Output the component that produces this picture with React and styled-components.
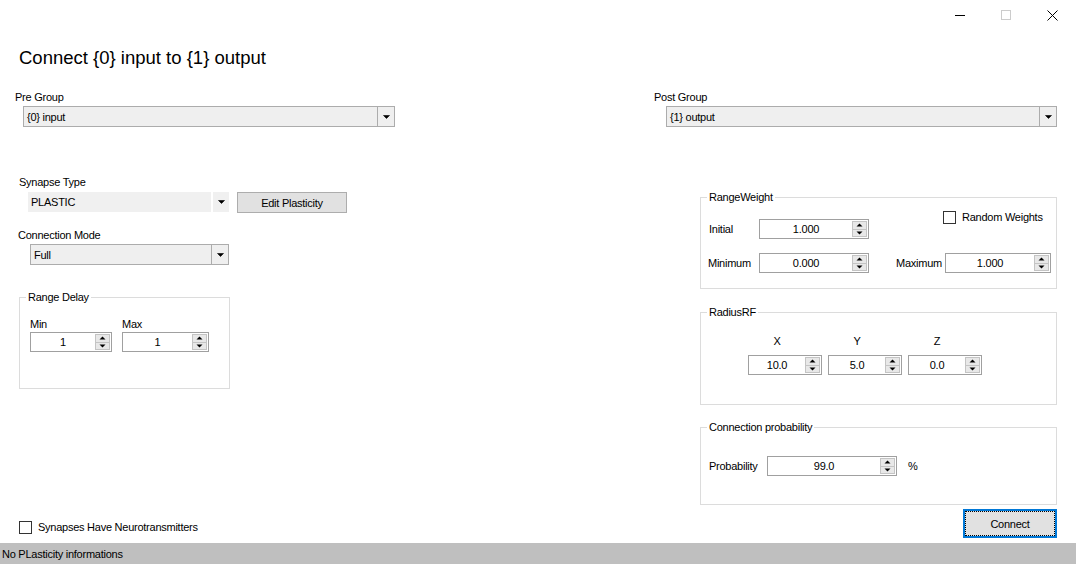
import React from 'react';
import styled, { createGlobalStyle } from 'styled-components';

const GlobalStyle = createGlobalStyle`
  html, body {
    margin: 0;
    padding: 0;
    background: #ffffff;
  }
  body {
    font-family: "Liberation Sans", Arial, sans-serif;
  }
`;

const Window = styled.div`
  width: 1076px;
  height: 564px;
  display: flex;
  flex-direction: column;
  background: #ffffff;
  overflow: hidden;
  font-size: 11px;
  letter-spacing: -0.25px;
  color: #000000;
`;

const CaptionBar = styled.div`
  display: flex;
  justify-content: flex-end;
  height: 30px;
  padding-right: 1px;
  flex-shrink: 0;
`;

const CaptionButton = styled.div`
  width: 46px;
  height: 30px;
  display: flex;
  align-items: center;
  justify-content: center;
`;

const Heading = styled.h1`
  margin: 15px 0 0 19px;
  font-size: 18.5px;
  line-height: 26px;
  font-weight: normal;
  letter-spacing: 0;
  flex-shrink: 0;
`;

const Content = styled.div`
  flex: 1;
  display: grid;
  grid-template-columns: 380px 403px;
  grid-template-rows: auto 1fr;
  column-gap: 259px;
  padding: 19px 0 4px 15px;
  min-height: 0;
`;

const Field = styled.div`
  display: flex;
  flex-direction: column;
`;

const Label = styled.div`
  line-height: 14px;
  height: 14px;
  margin-left: ${p => p.$indent || 0}px;
  margin-top: ${p => p.$top || 0}px;
  white-space: nowrap;
`;

const Combo = styled.div`
  display: flex;
  box-sizing: border-box;
  width: ${p => p.$w}px;
  height: 21px;
  margin-left: ${p => p.$indent || 0}px;
  margin-top: 2px;
  border: 1px solid #acacac;
  background: #efefef;
`;

const FlatCombo = styled(Combo)`
  height: 20px;
  margin-top: 0;
  border: none;
  background: #f0f0f0;
`;

const ComboText = styled.div`
  flex: 1;
  display: flex;
  align-items: center;
  padding-left: 3px;
  white-space: nowrap;
`;

const ComboArrow = styled.div`
  width: 16px;
  display: flex;
  align-items: center;
  justify-content: center;
  border-left: ${p => (p.$flat ? '2px solid #ffffff' : '1px solid #acacac')};
`;

const LeftColumn = styled.div`
  display: flex;
  flex-direction: column;
  padding-left: 4px;
`;

const RightColumn = styled.div`
  display: flex;
  flex-direction: column;
  padding-left: 46px;
`;

const InlineRow = styled.div`
  display: flex;
  align-items: flex-start;
  margin-top: 3px;
`;

const Button = styled.button`
  box-sizing: border-box;
  width: ${p => p.$w}px;
  height: ${p => p.$h}px;
  margin-left: ${p => p.$indent || 0}px;
  padding: 0;
  background: #e1e1e1;
  border: 1px solid #adadad;
  font-family: inherit;
  font-size: 11px;
  letter-spacing: -0.25px;
  color: #000000;
`;

const PrimaryButton = styled(Button)`
  align-self: flex-end;
  margin-top: 4px;
  border: 2px solid #0078d7;
  outline: 1px dotted #000000;
  outline-offset: -3px;
`;

const GroupBox = styled.fieldset`
  box-sizing: border-box;
  width: ${p => p.$w}px;
  min-width: 0;
  margin: ${p => p.$top || 0}px 0 0 0;
  padding: 0;
  border: 1px solid #dcdcdc;
`;

const Legend = styled.legend`
  margin-left: 6px;
  padding: 0 2px;
  line-height: 13px;
  height: 13px;
`;

const GroupBody = styled.div`
  padding: ${p => p.$pad};
`;

const SpinBox = styled.div`
  display: flex;
  box-sizing: border-box;
  width: ${p => p.$w}px;
  height: 20px;
  border: 1px solid #a0a0a0;
  background: #ffffff;
`;

const SpinValue = styled.div`
  flex: 1;
  display: flex;
  align-items: center;
  justify-content: center;
`;

const SpinButtons = styled.div`
  width: 15px;
  display: flex;
  flex-direction: column;
  padding: 1px 1px 1px 0;
`;

const SpinHalf = styled.div`
  flex: 1;
  display: flex;
  align-items: center;
  justify-content: center;
  background: #e8e8e8;
  border: 1px solid #c4c4c4;
  border-top: ${p => (p.$down ? 'none' : '1px solid #c4c4c4')};
`;

const DelayRow = styled.div`
  display: flex;
  gap: 10px;
`;

const LabeledSpin = styled.div`
  display: flex;
  flex-direction: column;
  gap: 1px;
`;

const WeightGrid = styled.div`
  display: grid;
  grid-template-columns: 50px 110px 27px 49px 106px;
  grid-template-rows: 29px 20px;
  row-gap: 14px;
`;

const GridLabel = styled.div`
  align-self: end;
  line-height: 20px;
  height: 20px;
  width: ${p => (p.$w ? `${p.$w}px` : 'auto')};
  margin-left: ${p => p.$shift || 0}px;
  white-space: nowrap;
`;

const SpinCell = styled.div`
  align-self: end;
`;

const CheckRow = styled.label`
  display: flex;
  align-items: center;
  gap: 6px;
  height: 14px;
  white-space: nowrap;
  grid-column: ${p => p.$col || 'auto'};
  margin-left: ${p => p.$indent || 0}px;
  margin-top: ${p => (p.$push ? 'auto' : '0')};
  margin-bottom: ${p => p.$bottom || 0}px;
  align-self: start;
`;

const CheckBox = styled.span`
  box-sizing: border-box;
  width: 13px;
  height: 13px;
  border: 1px solid #333333;
  background: #ffffff;
  flex-shrink: 0;
`;

const AxisRow = styled.div`
  display: flex;
  gap: 6px;
`;

const AxisCell = styled.div`
  display: flex;
  flex-direction: column;
  gap: 7px;
`;

const AxisLabel = styled.div`
  line-height: 14px;
  height: 14px;
  padding-right: 16px;
  text-align: center;
`;

const ProbRow = styled.div`
  display: flex;
  align-items: center;
  height: 20px;
`;

const Unit = styled.span`
  margin-left: 11px;
`;

const StatusBar = styled.div`
  height: 21px;
  flex-shrink: 0;
  display: flex;
  align-items: center;
  padding: 1px 0 0 2px;
  box-sizing: border-box;
  background: #bfbfbf;
`;

const DropArrow = () => (
  <svg width="7" height="4" viewBox="0 0 7 4">
    <path d="M0.5 0.5 H6.5 L3.5 3.5 Z" fill="#000" stroke="#000" strokeWidth="0.6" />
  </svg>
);

const SpinArrow = ({ down }) => (
  <svg width="7" height="4" viewBox="0 0 7 4">
    {down ? <path d="M0.5 0.5 H6.5 L3.5 3.5 Z" fill="#000" /> : <path d="M0.5 3.5 H6.5 L3.5 0.5 Z" fill="#000" />}
  </svg>
);

const Spinner = ({ value, w }) => (
  <SpinBox $w={w}>
    <SpinValue>{value}</SpinValue>
    <SpinButtons>
      <SpinHalf>
        <SpinArrow />
      </SpinHalf>
      <SpinHalf $down>
        <SpinArrow down />
      </SpinHalf>
    </SpinButtons>
  </SpinBox>
);

const App = () => (
  <>
    <GlobalStyle />
    <Window>
      <CaptionBar>
        <CaptionButton>
          <svg width="10" height="10" viewBox="0 0 10 10">
            <path d="M0 5.5 H10" stroke="#000" strokeWidth="1" />
          </svg>
        </CaptionButton>
        <CaptionButton>
          <svg width="10" height="10" viewBox="0 0 10 10">
            <rect x="0.5" y="0.5" width="9" height="9" fill="none" stroke="#cccccc" strokeWidth="1" />
          </svg>
        </CaptionButton>
        <CaptionButton>
          <svg width="11" height="11" viewBox="0 0 11 11">
            <path d="M0.5 0.5 L10.5 10.5 M10.5 0.5 L0.5 10.5" stroke="#000" strokeWidth="1" />
          </svg>
        </CaptionButton>
      </CaptionBar>

      <Heading>Connect {'{0}'} input to {'{1}'} output</Heading>

      <Content>
        <Field>
          <Label>Pre Group</Label>
          <Combo $w={372} $indent={8}>
            <ComboText>{'{0}'} input</ComboText>
            <ComboArrow>
              <DropArrow />
            </ComboArrow>
          </Combo>
        </Field>
        <Field>
          <Label>Post Group</Label>
          <Combo $w={391} $indent={12}>
            <ComboText>{'{1}'} output</ComboText>
            <ComboArrow>
              <DropArrow />
            </ComboArrow>
          </Combo>
        </Field>

        <LeftColumn>
          <Label $top={48}>Synapse Type</Label>
          <InlineRow>
            <FlatCombo $w={201} $indent={9}>
              <ComboText>PLASTIC</ComboText>
              <ComboArrow $flat>
                <DropArrow />
              </ComboArrow>
            </FlatCombo>
            <Button $w={110} $h={21} $indent={8}>Edit Plasticity</Button>
          </InlineRow>

          <Label $top={15} $indent={-1}>Connection Mode</Label>
          <Combo $w={199} $indent={11}>
            <ComboText>Full</ComboText>
            <ComboArrow>
              <DropArrow />
            </ComboArrow>
          </Combo>

          <GroupBox $w={211} $top={26}>
            <Legend>Range Delay</Legend>
            <GroupBody $pad="13px 0 36px 10px">
              <DelayRow>
                <LabeledSpin>
                  <Label>Min</Label>
                  <Spinner value="1" w={82} />
                </LabeledSpin>
                <LabeledSpin>
                  <Label>Max</Label>
                  <Spinner value="1" w={87} />
                </LabeledSpin>
              </DelayRow>
            </GroupBody>
          </GroupBox>

          <CheckRow $push $bottom={5}>
            <CheckBox />
            Synapses Have Neurotransmitters
          </CheckRow>
        </LeftColumn>

        <RightColumn>
          <GroupBox $w={357} $top={64}>
            <Legend>RangeWeight</Legend>
            <GroupBody $pad="6px 0 15px 8px">
              <WeightGrid>
                <GridLabel>Initial</GridLabel>
                <SpinCell>
                  <Spinner value="1.000" w={110} />
                </SpinCell>
                <CheckRow $col="5" $indent={-2}>
                  <CheckBox />
                  Random Weights
                </CheckRow>
                <GridLabel $shift={-1}>Minimum</GridLabel>
                <SpinCell>
                  <Spinner value="0.000" w={110} />
                </SpinCell>
                <span />
                <GridLabel>Maximum</GridLabel>
                <SpinCell>
                  <Spinner value="1.000" w={106} />
                </SpinCell>
              </WeightGrid>
            </GroupBody>
          </GroupBox>

          <GroupBox $w={357} $top={17}>
            <Legend>RadiusRF</Legend>
            <GroupBody $pad="15px 0 29px 47px">
              <AxisRow>
                <AxisCell>
                  <AxisLabel>X</AxisLabel>
                  <Spinner value="10.0" w={74} />
                </AxisCell>
                <AxisCell>
                  <AxisLabel>Y</AxisLabel>
                  <Spinner value="5.0" w={74} />
                </AxisCell>
                <AxisCell>
                  <AxisLabel>Z</AxisLabel>
                  <Spinner value="0.0" w={74} />
                </AxisCell>
              </AxisRow>
            </GroupBody>
          </GroupBox>

          <GroupBox $w={357} $top={16}>
            <Legend>Connection probability</Legend>
            <GroupBody $pad="22px 0 28px 8px">
              <ProbRow>
                <GridLabel $w={58}>Probability</GridLabel>
                <Spinner value="99.0" w={130} />
                <Unit>%</Unit>
              </ProbRow>
            </GroupBody>
          </GroupBox>

          <PrimaryButton $w={94} $h={29}>Connect</PrimaryButton>
        </RightColumn>
      </Content>

      <StatusBar>No PLasticity informations</StatusBar>
    </Window>
  </>
);

export default App;
